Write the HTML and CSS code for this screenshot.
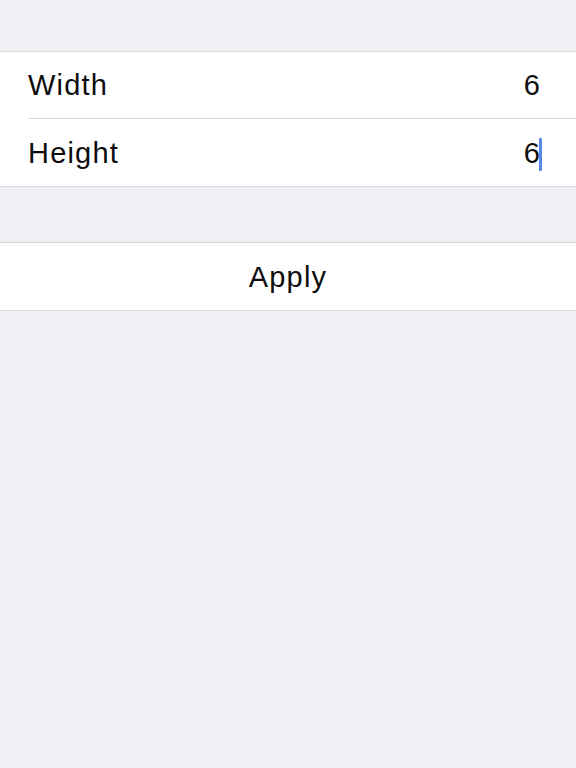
FILE: index.html
```html
<!DOCTYPE html>
<html lang="en">
<head>
    <meta charset="UTF-8">
    <title>Size</title>
    <link rel="stylesheet" href="styles.css">
</head>
<body>
    <div class="settings">
        <div class="group">
            <div class="row">
                <span class="label">Width</span>
                <span class="value">6</span>
            </div>
            <div class="row">
                <span class="label">Height</span>
                <span class="value">6<span class="caret"></span></span>
            </div>
        </div>

        <div class="group">
            <div class="row button-row">
                <span class="button">Apply</span>
            </div>
        </div>
    </div>
</body>
</html>
```

FILE: styles.css
```css
:root {
    --bg: #efeff4;
    --line: #d9d9de;
    --text: #0d0d0d;
    --caret: #5a86e8;
}

* {
    margin: 0;
    padding: 0;
    box-sizing: border-box;
}

body {
    font-family: 'Liberation Sans', Arial, sans-serif;
    background: var(--bg);
    color: var(--text);
    min-height: 100vh;
}

.settings {
    padding-top: 51px;
}

.group {
    background: #ffffff;
    border-top: 1px solid var(--line);
    border-bottom: 1px solid var(--line);
    padding-left: 28px;
    margin-bottom: 55px;
}

.row {
    height: 66px;
    display: flex;
    align-items: center;
    justify-content: space-between;
    padding-right: 36px;
    font-size: 29px;
    letter-spacing: 1.2px;
}

.row + .row {
    border-top: 1px solid var(--line);
    height: 68px;
    padding-top: 2px;
}

.value {
    display: flex;
    align-items: center;
    letter-spacing: 0;
}

.caret {
    display: inline-block;
    width: 3px;
    height: 33px;
    margin-left: -1px;
    margin-right: -2px;
    margin-top: 1px;
    background: var(--caret);
    border-radius: 1px;
}

.button-row {
    justify-content: center;
    margin-left: -28px;
    padding-right: 0;
    height: 67px;
}

.button {
    padding-top: 2px;
}
```
